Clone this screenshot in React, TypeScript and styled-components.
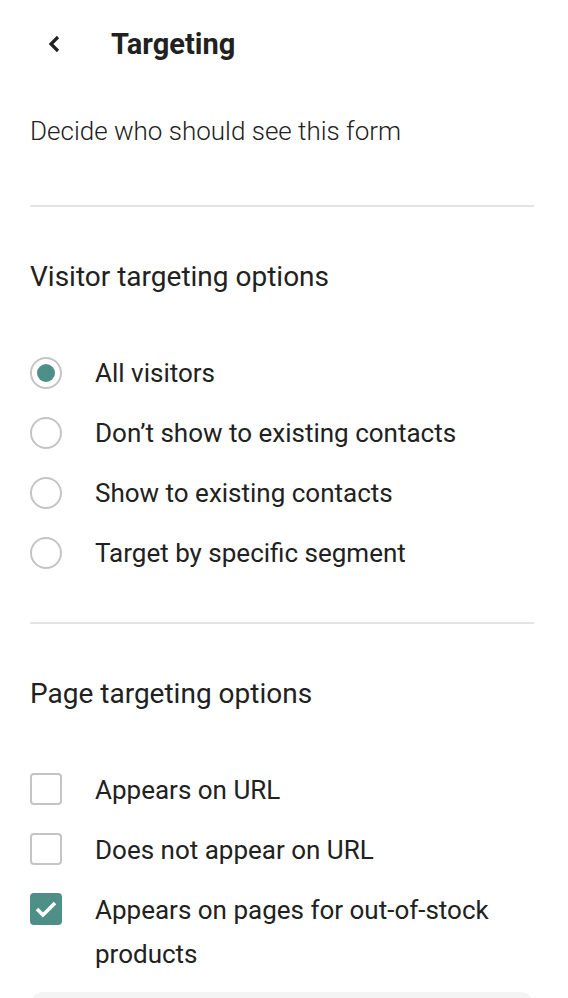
import React, { ReactElement } from "react";
import styled, { createGlobalStyle } from "styled-components";

const teal = "#4e8f88";

const GlobalStyle = createGlobalStyle`
  html, body {
    margin: 0;
    padding: 0;
    background: #fff;
  }
  body {
    font-family: Roboto, "Liberation Sans", Arial, sans-serif;
    color: #212121;
  }
`;

const Page = styled.div`
  padding: 0 34px 0 30px;
`;

const Header = styled.header`
  height: 88px;
  display: flex;
  align-items: center;
  padding-left: 16px;
`;

const BackButton = styled.button`
  border: 0;
  background: none;
  padding: 0;
  width: 16px;
  height: 24px;
  display: flex;
  align-items: center;
  justify-content: center;
  margin-right: 49px;
  cursor: pointer;
`;

const Title = styled.h1`
  margin: 0;
  font-size: 29px;
  font-weight: 700;
`;

const Description = styled.p`
  margin: 25px 0 0;
  font-size: 26px;
  line-height: 36px;
  font-weight: 300;
`;

const Divider = styled.hr<{ $top: number }>`
  border: 0;
  height: 2px;
  background: #e4e4e4;
  margin: ${(p) => p.$top}px 0 0;
`;

const SectionTitle = styled.h2`
  margin: 52px 0 0;
  font-size: 28px;
  line-height: 36px;
  font-weight: 400;
`;

const OptionList = styled.ul`
  list-style: none;
  margin: 48px 0 0;
  padding: 0;
`;

const Option = styled.li`
  display: flex;
  align-items: flex-start;
  gap: 33px;
  padding: 8px 0;
  font-size: 26px;
  line-height: 44px;
`;

const Radio = styled.span<{ $checked?: boolean }>`
  flex: none;
  width: 32px;
  height: 32px;
  margin-top: 6px;
  box-sizing: border-box;
  border: 2px solid #c4c4c4;
  border-radius: 50%;
  display: flex;
  align-items: center;
  justify-content: center;
  &::after {
    content: "";
    width: 18px;
    height: 18px;
    border-radius: 50%;
    background: ${(p) => (p.$checked ? teal : "transparent")};
  }
`;

const Checkbox = styled.span<{ $checked?: boolean }>`
  flex: none;
  width: 32px;
  height: 32px;
  margin-top: 5px;
  box-sizing: border-box;
  border: 2px solid ${(p) => (p.$checked ? teal : "#c4c4c4")};
  background: ${(p) => (p.$checked ? teal : "#fff")};
  border-radius: 4px;
  display: flex;
  align-items: center;
  justify-content: center;
`;

const Label = styled.span`
  flex: 1;
`;

const Panel = styled.div`
  margin-top: 8px;
  height: 60px;
  border-radius: 14px;
  background: #f4f4f4;
`;

function Chevron(): ReactElement {
  return (
    <svg width="14" height="20" viewBox="0 0 14 20">
      <polyline
        points="11,3 4,10 11,17"
        fill="none"
        stroke="#212121"
        strokeWidth="3.2"
      />
    </svg>
  );
}

function Check(): ReactElement {
  return (
    <svg width="24" height="20" viewBox="0 0 24 20">
      <polyline
        points="3,10 9,16 21,4"
        fill="none"
        stroke="#fff"
        strokeWidth="3.6"
      />
    </svg>
  );
}

const visitorOptions = [
  { label: "All visitors", checked: true },
  { label: "Don’t show to existing contacts", checked: false },
  { label: "Show to existing contacts", checked: false },
  { label: "Target by specific segment", checked: false },
];

const pageOptions = [
  { label: "Appears on URL", checked: false },
  { label: "Does not appear on URL", checked: false },
  { label: "Appears on pages for out-of-stock products", checked: true },
];

export default function App(): ReactElement {
  return (
    <>
      <GlobalStyle />
      <Page>
        <Header>
          <BackButton aria-label="Back">
            <Chevron />
          </BackButton>
          <Title>Targeting</Title>
        </Header>
        <Description>Decide who should see this form</Description>
        <Divider $top={56} />

        <SectionTitle>Visitor targeting options</SectionTitle>
        <OptionList>
          {visitorOptions.map((o) => (
            <Option key={o.label}>
              <Radio $checked={o.checked} />
              <Label>{o.label}</Label>
            </Option>
          ))}
        </OptionList>
        <Divider $top={39} />

        <SectionTitle>Page targeting options</SectionTitle>
        <OptionList>
          {pageOptions.map((o) => (
            <Option key={o.label}>
              <Checkbox $checked={o.checked}>{o.checked && <Check />}</Checkbox>
              <Label>{o.label}</Label>
            </Option>
          ))}
        </OptionList>
        <Panel />
      </Page>
    </>
  );
}
